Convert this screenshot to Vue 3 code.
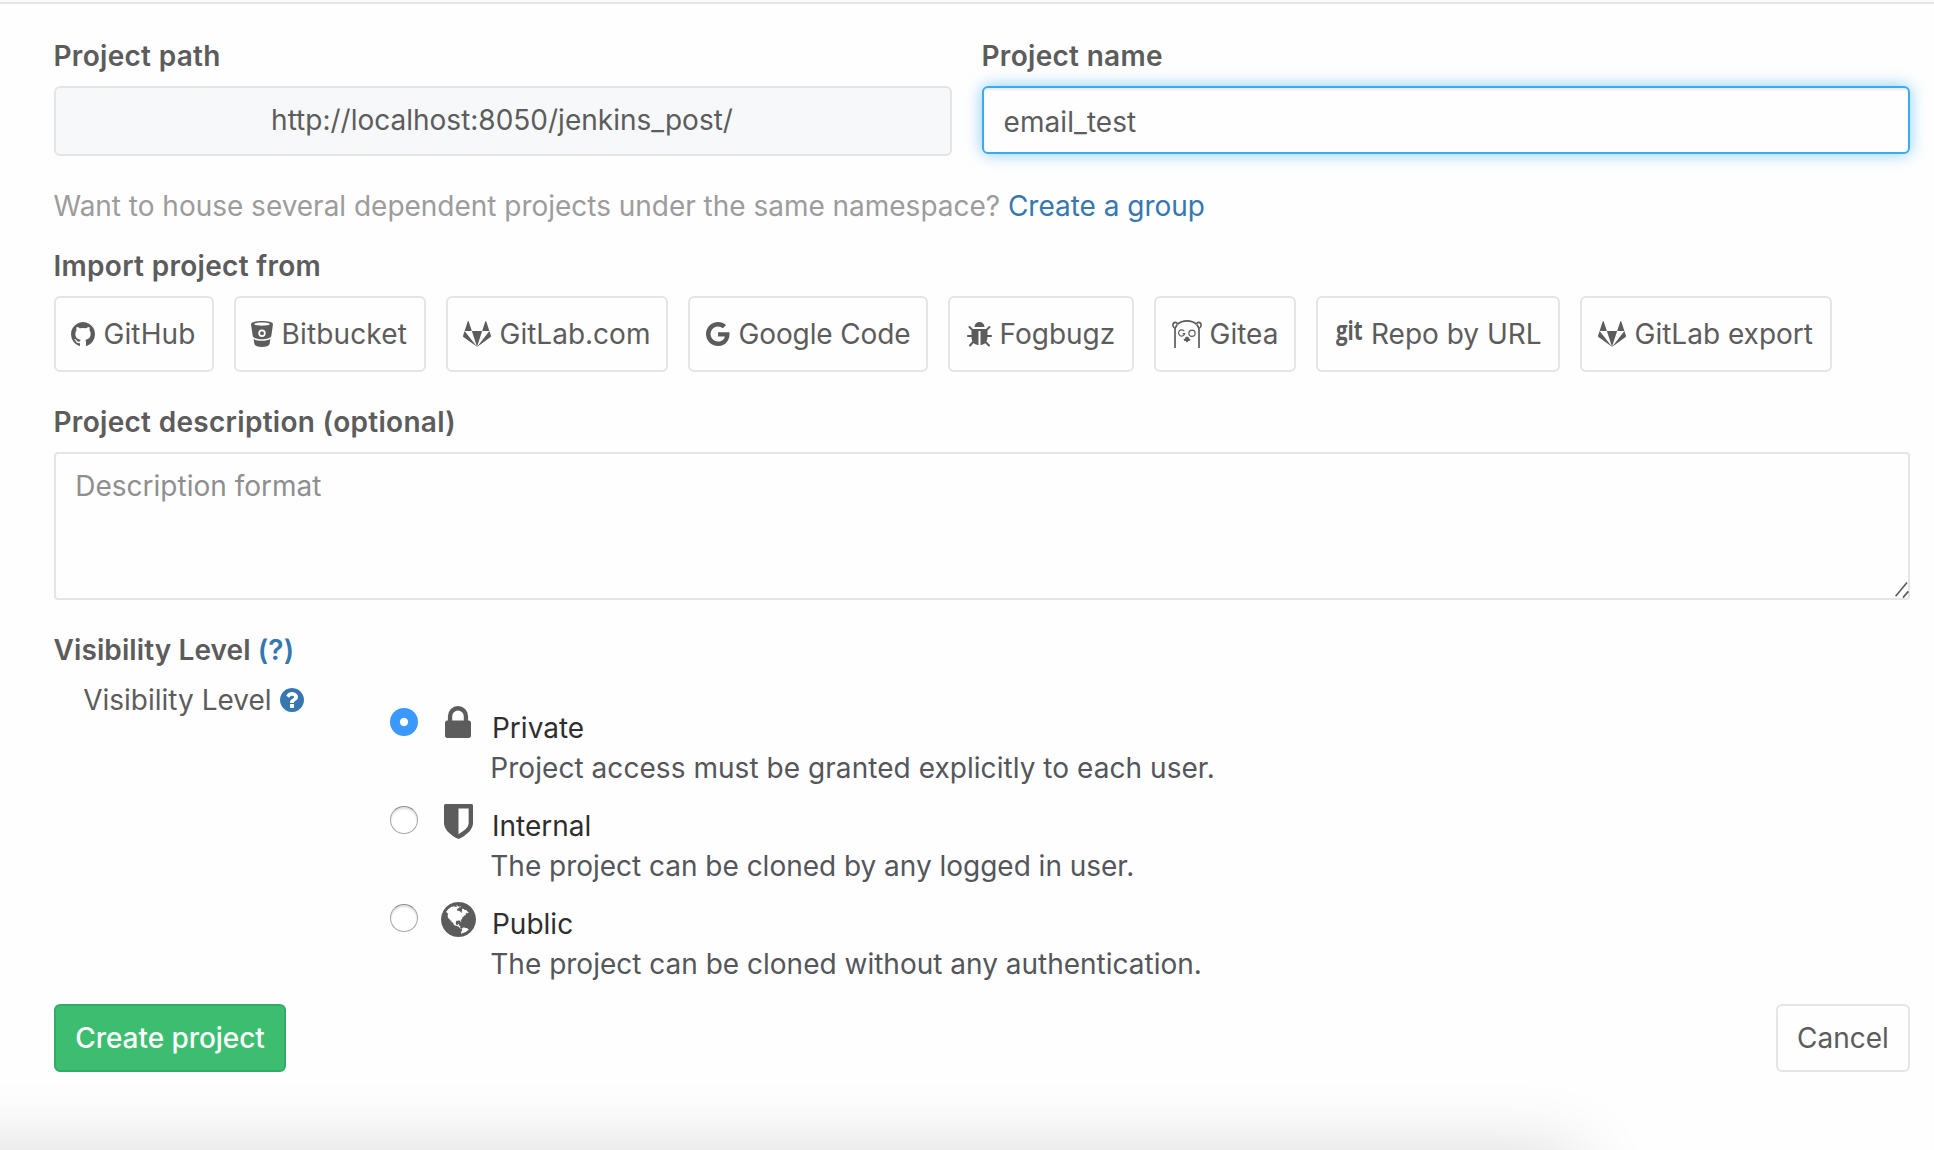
<script setup>
import { ref } from 'vue'

const projectName = ref('email_test')
const description = ref('')
const visibility = ref('private')

const tanuki = 'M104 706l792 1015-868-630q-18-13-25-34.5t0-42.5zm462 0h660l-330 1015zm-198-612l198 612h-462l198-612q8-23 33-23t33 23zm1320 612l101 309q7 21 0 42.5t-25 34.5l-868 630zm0 0h-462l198-612q8-23 33-23t33 23z'

const importers = [
  { id: 'github', label: 'GitHub' },
  { id: 'bitbucket', label: 'Bitbucket' },
  { id: 'gitlab', label: 'GitLab.com' },
  { id: 'google', label: 'Google Code' },
  { id: 'fogbugz', label: 'Fogbugz' },
  { id: 'gitea', label: 'Gitea' },
  { id: 'repo', label: 'Repo by URL' },
  { id: 'export', label: 'GitLab export' }
]

const levels = [
  { id: 'private', title: 'Private', text: 'Project access must be granted explicitly to each user.' },
  { id: 'internal', title: 'Internal', text: 'The project can be cloned by any logged in user.' },
  { id: 'public', title: 'Public', text: 'The project can be cloned without any authentication.' }
]
</script>

<template>
  <div class="page">
    <form class="form" @submit.prevent>
      <div class="row">
        <div class="col path">
          <label class="label">Project path</label>
          <div class="static">http://localhost:8050/jenkins_post/</div>
        </div>
        <div class="col name">
          <label class="label">Project name</label>
          <input v-model="projectName" class="input" type="text" />
        </div>
      </div>

      <p class="hint">Want to house several dependent projects under the same namespace? <a class="link">Create a group</a></p>

      <label class="label">Import project from</label>
      <div class="importers">
        <a v-for="item in importers" :key="item.id" class="btn import" :class="item.id">
          <svg v-if="item.id === 'github'" class="icon" width="24" height="24" viewBox="128 128 1536 1500" preserveAspectRatio="none">
            <path d="M896 128q209 0 385.5 103t279.5 279.5 103 385.5q0 251-146.5 451.5t-378.5 277.5q-27 5-40-7t-13-30q0-3 .5-76.500t.5-134.500q0-97-52-142 57-6 102.500-18t94-39 81-66.500 53-105 20.500-150.500q0-119-79-206 37-91-8-204-28-9-81 11t-92 44l-38 24q-93-26-192-26t-192 26q-16-11-42.500-27t-83.500-38.500-85-13.500q-45 113-8 204-79 87-79 206 0 85 20.500 150t52.500 105 80.500 67 94 39 102.500 18q-39 36-49 103-21 10-45 15t-57 5-65.500-21.500-55.500-62.500q-19-32-48.500-52t-49.500-24l-20-3q-21 0-29 4.500t-5 11.500 9 14 13 12l7 5q22 10 43.500 38t31.500 51l10 23q13 38 44 61.500t67 30 69.500 7 55.500-3.500l23-4q0 38 .5 88.500t.5 54.500q0 18-13 30t-40 7q-232-77-378.500-277.500t-146.500-451.500q0-209 103-385.500t279.500-279.500 385.500-103z" />
          </svg>
          <svg v-else-if="item.id === 'bitbucket'" class="icon" width="22" height="26" viewBox="0 0 22 26">
            <path fill-rule="evenodd" d="M11 0C17 0 22 1 22 3.200L20.300 14.800C20.100 16.800 16 18.300 11 18.300S1.900 16.800 1.700 14.800L0 3.200C0 1 5 0 11 0zM11 1.500C6.500 1.500 3.200 2.200 3.200 3.100S6.500 4.700 11 4.700 18.800 4 18.800 3.100 15.500 1.500 11 1.500zM11 8.500A3.700 3.700 0 1 0 11 15.900A3.700 3.700 0 1 0 11 8.500z" />
            <circle cx="11" cy="12.200" r="1.900" />
            <path d="M2.600 18C6 20.400 16 20.400 19.400 18L18.600 23C18 25 15 25.900 11 25.900S4 25 3.400 23z" />
          </svg>
          <svg v-else-if="item.id === 'gitlab' || item.id === 'export'" class="icon" width="28" height="26" viewBox="0 66 1792 1664">
            <path :d="tanuki" />
          </svg>
          <svg v-else-if="item.id === 'google'" class="icon" width="24" height="24" viewBox="128 128 1536 1536">
            <path d="M896 786h725q12 67 12 128 0 217-91 387.500t-259.500 266.500-386.500 96q-157 0-299-60.500t-245-163.500-163.500-245-60.500-299 60.500-299 163.500-245 245-163.500 299-60.500q300 0 515 201l-209 201q-123-119-306-119-129 0-238.500 65t-173.500 176.500-64 243.500 64 243.500 173.500 176.500 238.500 65q87 0 160-24t120-60 82-82 51.500-87 22.500-78h-436v-264z" />
          </svg>
          <svg v-else-if="item.id === 'fogbugz'" class="icon" width="25" height="25" viewBox="96 64 1600 1600">
            <path d="M1696 960q0 26-19 45t-45 19h-224q0 171-67 290l208 209q19 19 19 45t-19 45q-18 19-45 19t-45-19l-198-197q-5 5-15 13t-42 28.500-65 36.500-82 29-97 13v-896h-128v896q-51 0-101.500-13.500t-87-33-66-39-43.500-32.500l-15-14-183 207q-20 21-48 21-24 0-43-16-19-18-20.500-44.500t15.500-46.500l202-227q-58-114-58-274h-224q-26 0-45-19t-19-45 19-45 45-19h224v-294l-173-173q-19-19-19-45t19-45 45-19 45 19l173 173h844l173-173q19-19 45-19t45 19 19 45-19 45l-173 173v294h224q26 0 45 19t19 45zm-480-576h-640q0-133 93.500-226.500t226.500-93.500 226.500 93.500 93.500 226.500z" />
          </svg>
          <svg v-else-if="item.id === 'gitea'" class="icon line" width="30" height="28" viewBox="0 0 30 28">
            <path stroke-width="1.700" d="M3 28V10C3 8 4 6 5.200 4.600M27 28V10C27 8 26 6 24.800 4.600M5.500 4.300C8 2 11 .9 15 .9S22 2 24.500 4.300" />
            <path stroke-width="1.600" d="M2.800 8.400C-.2 6.500.6 2.400 3.400 2.400C4.400 2.400 5.200 3 5.600 4M27.200 8.400C30.200 6.500 29.400 2.400 26.600 2.400C25.600 2.400 24.800 3 24.400 4" />
            <path stroke-width="1.200" d="M12.300 11.300A3.100 3.100 0 1 0 12.700 13.600H10.600" />
            <circle cx="20" cy="13.200" r="3.100" stroke-width="1.200" />
            <path class="solid" d="M13.200 17.600C13.200 16.600 16.800 16.600 16.800 17.600V18.600L18.500 19.300 17.600 21H16.200L15.600 22.300H14.400L13.800 21H12.400L11.500 19.300L13.200 18.600z" />
          </svg>
          <span v-else class="icon git-mark">git</span>
          <span>{{ item.label }}</span>
        </a>
      </div>

      <label class="label desc-label">Project description (optional)</label>
      <div class="area-wrap">
        <textarea v-model="description" class="area" placeholder="Description format"></textarea>
        <svg class="grip" width="16" height="18" viewBox="0 0 16 18">
          <path d="M1.600 15.200L13 1.500M9 16.600L14.400 10.400" />
        </svg>
      </div>

      <div class="label vis-heading">Visibility Level <a class="link">(?)</a></div>
      <div class="visibility">
        <div class="vis-label">
          <span>Visibility Level</span>
          <svg class="help" width="24" height="24" viewBox="128 128 1536 1536">
            <path d="M1024 1376v-192q0-14-9-23t-23-9h-192q-14 0-23 9t-9 23v192q0 14 9 23t23 9h192q14 0 23-9t9-23zm256-672q0-88-55.500-163t-138.500-116-170-41q-243 0-371 213-15 24 8 42l132 100q7 6 19 6 16 0 25-12 53-68 86-92 34-24 86-24 48 0 85.500 26t37.500 59q0 38-20 61t-68 45q-63 28-115.500 86.500t-52.500 125.500v36q0 14 9 23t23 9h192q14 0 23-9t9-23q0-19 21.500-49.500t54.500-49.500q32-18 49-28.500t46-35 44.500-48 28-60.500 12.500-81zm384 192q0 209-103 385.500t-279.500 279.500-385.500 103-385.500-103-279.500-279.500-103-385.500 103-385.500 279.500-279.500 385.500-103 385.500 103 279.500 279.500 103 385.500z" />
          </svg>
        </div>
        <div class="levels">
          <div v-for="level in levels" :key="level.id" class="level" @click="visibility = level.id">
            <span class="radio" :class="{ on: visibility === level.id }"></span>
            <span class="glyph">
              <svg v-if="level.id === 'private'" width="26" height="32" viewBox="320 128 1152 1408">
                <path d="M640 768h512v-192q0-106-75-181t-181-75-181 75-75 181v192zm832 96v576q0 40-28 68t-68 28h-960q-40 0-68-28t-28-68v-576q0-40 28-68t68-28h32v-192q0-184 132-316t316-132 316 132 132 316v192h32q40 0 68 28t28 68z" />
              </svg>
              <svg v-else-if="level.id === 'internal'" width="29" height="35" viewBox="256 128 1280 1536">
                <path d="M1344 960v-640h-448v1137q119-63 213-137 235-184 235-360zm192-768v768q0 86-33.500 170.500t-83 150-118 127.500-126.500 103-121 77.500-89.500 49.500-42.500 20q-12 6-26 6t-26-6q-16-7-42.500-20t-89.500-49.500-121-77.500-126.500-103-118-127.500-83-150-33.500-170.500v-768q0-26 19-45t45-19h1152q26 0 45 19t19 45z" />
              </svg>
              <svg v-else width="35" height="35" viewBox="128 128 1536 1536">
                <path d="M896 128q209 0 385.500 103t279.500 279.500 103 385.500-103 385.500-279.500 279.500-385.500 103-385.500-103-279.500-279.500-103-385.500 103-385.500 279.500-279.500 385.500-103zm274 521q-2 1-9.500 9.500t-13.500 9.500q2 0 4.500-5t5-11 3.500-7q6-7 22-15 14-6 52-12 34-8 51 11-2-2 9.500-13t14.500-12q3-2 15-4.500t15-7.500l2-22q-12 1-17.500-7t-6.500-21q0 2-6 8 0-7-4.500-8t-11.500 1-9 1q-10-3-15-7.500t-8-16.500-4-15q-2-5-9.500-10.500t-9.500-10.500q-1-2-2.500-5.500t-3-6.500-4-5.500-5.500-2.500-7 5-7.500 10-4.500 5q-3-2-6-1.500t-4.500 1-4.500 3-5 3.500q-3 2-8.500 3t-8.500 2q15-5-1-11-10-4-16-3 9-4 7.500-12t-8.500-14h5q-1-4-8.500-8.500t-17.500-8.500-13-6q-8-5-34-9.500t-33-.5q-5 6-4.500 10.500t4 14 3.500 12.500q1 6-5.500 13t-6.500 12q0 7 14 15.500t10 21.500q-3 8-16 16t-16 12q-5 8-1.500 18.500t10.500 16.500q2 2 1.500 4t-3.500 4.500-5.500 4-6.500 3.500l-3 2q-11 5-20.500-6t-13.500-26q-7-25-16-30-23-8-29 1-5-13-41-26-25-9-58-4 6-1 0-15-7-15-19-12 3-6 4-17.500t1-13.500q3-13 12-23 1-1 7-8.500t9.500-13.500.5-6q35 4 50-11 5-5 11.500-17t10.500-17q9-6 14-5.500t14.500 5.500 14.500 5q14 1 15.500-11t-7.500-20q12 1 3-17-4-7-8-9-12-4-27 5-8 4 2 8-1-1-9.500 10.500t-16.500 17.500-16-5q-1-1-5.500-13.500t-9.500-13.500q-8 0-16 15 3-8-11-15t-24-8q19-12-8-27-7-4-20.500-5t-19.500 4q-5 7-5.500 11.500t5 8 10.500 5.500 11.500 4 8.500 3q14 10 8 14-2 1-8.500 3.500t-11.500 4.500-6 4q-3 4 0 14t-2 14q-5-5-9-17.500t-7-16.500q7 9-25 6l-10-1q-4 0-16 2t-20.500 1-13.500-8q-4-8 0-20 1-4 4-2-4-3-11-9.500t-10-8.500q-46 15-94 41 6 1 12-1 5-2 13-6.500t10-5.500q34-14 42-7l5-5q14 16 20 25-7-4-30-1-20 6-22 12 7 12 5 18-4-3-11.500-10t-14.500-11-15-5q-16 0-22 1-146 80-235 222 7 7 12 8 4 1 5 9t2.500 11 11.500-3q9 8 3 19 1-1 44 27 19 17 21 21 3 11-10 18-1-2-9-9t-9-4q-3 5 .5 18.500t10.500 12.500q-7 0-9.500 16t-2.500 35.500-1 23.500l2 1q-3 12 5.500 34.500t21.500 19.500q-13 3 20 43 6 8 8 9 3 2 12 7.500t15 10 10 10.500q4 5 10 22.500t14 23.500q-2 6 9.500 20t10.500 23q-1 0-2.500 1t-2.500 1q3 7 15.500 14t15.500 13q1 3 2 10t3 11 8 2q2-20-24-62-15-25-17-29-3-5-5.500-15.500t-4.500-14.500q2 0 6 1.500t8.500 3.500 7.500 4 2 3q-3 7 2 17.500t12 18.500 17 19 12 13q6 6 14 19.500t0 13.500q9 0 20 10.500t17 19.500q5 8 8 26t5 24q2 7 8.500 13.500t12.500 9.500l16 8 13 7q5 2 18.500 10.500t21.500 11.500q10 4 16 4t14.500-2.500 13.500-3.500q15-2 29 15t21 21q36 19 55 11-2 1 .5 7.500t8 15.500 9 14.500 5.500 8.500q5 6 18 15t18 15q6-4 7-9-3 8 7 20t18 10q14-3 14-32-31 15-49-18 0-1-2.500-5.500t-4-8.500-2.500-8.500 0-7.500 5-3q9 0 10-3.500t-2-12.500-4-13q-1-8-11-20t-12-15q-5 9-16 8t-16-9q0 1-1.500 5.500t-1.500 6.500q-13 0-15-1 1-3 2.500-17.500t3.500-22.500q1-4 5.500-12t7.500-14.500 4-12.500-4.500-9.500-17.500-2.500q-19 1-26 20-1 3-3 10.500t-5 11.500-9 7q-7 3-24 2t-24-5q-13-8-22.500-29t-9.500-37q0-10 2.500-26.500t3-25-5.500-24.500q3-2 9-9.500t10-10.500q2-1 4.500-1.500t4.500 0 4-1.500 3-6q-1-1-4-3-3-3-4-3 7 3 28.500-1.500t27.500 1.500q15 11 22-2 0-1-2.500-9.500t-.5-13.500q5 27 29 9 3 3 15.500 5t17.500 5q3 2 7 5.500t5.500 4.500 5-.5 8.500-6.500q10 14 12 24 11 40 19 44 7 3 11 2t4.500-9.500 0-14-1.500-12.500l-1-8v-18l-1-8q-15-3-18.500-12t1.500-18.500 15-18.500q1-1 8-3.500t15.500-6.500 12.500-8q21-19 15-35 7 0 11-9-1 0-5-3t-7.500-5-4.500-2q9-5 2-16 5-3 7.500-11t7.500-10q9 12 21 2 8-8 1-16 5-7 20.500-10.500t18.500-9.500q7 2 8-2t1-12 3-12q4-5 15-9t13-5l17-11q3-4 0-4 18 2 31-11 10-11-6-20 3-6-3-9.500t-15-5.500q3-1 11.500-.5t10.500-1.500q15-10-7-16-17-5-43 12zm-163 877q206-36 351-189-3-3-12.500-4.500t-12.500-3.500q-18-7-24-8 1-7-2.500-13t-8-9-12.500-8-11-7q-2-2-7-6t-7-5.500-7.500-4.500-8.500-2-10 1l-3 1q-3 1-5.500 2.500t-5.500 3-4 3 0 2.500q-21-17-36-22-5-1-11-5.500t-10.500-7-10-1.500-11.500 7q-5 5-6 15t-2 13q-7-5 0-17.500t2-18.500q-3-6-10.500-4.500t-12 4.500-11.500 8.500-9 6.500-8.500 5.500-8.500 7.500q-3 4-6 12t-5 11q-2-4-11.500-6.500t-9.500-5.500q2 10 4 35t5 38q7 31-12 48-27 25-29 40-4 22 12 26 0 7-8 20.500t-7 21.500q0 6 2 16z" />
              </svg>
            </span>
            <div class="copy">
              <div class="title">{{ level.title }}</div>
              <div class="text" :class="level.id + '-text'">{{ level.text }}</div>
            </div>
          </div>
        </div>
      </div>

      <div class="actions">
        <button class="btn create" type="submit">Create project</button>
        <a class="btn cancel">Cancel</a>
      </div>
    </form>
    <div class="window-shadow"></div>
  </div>
</template>

<style>
body {
  margin: 0;
  background: #fefefe;
}
</style>

<style scoped>
.page {
  position: relative;
  box-sizing: border-box;
  width: 1934px;
  height: 1150px;
  overflow: hidden;
  padding: 32px 24px 0 54px;
  background: #fefefe;
  border-top: 2px solid #fafafa;
  color: #5c5c5c;
  font: 28px/40px Inter, "Liberation Sans", sans-serif;
  box-shadow: inset 0 2px 0 #e5e5e5;
}
.page * {
  box-sizing: border-box;
}
.form {
  display: flex;
  flex-direction: column;
  padding-top: 2px;
}
.row {
  display: flex;
  gap: 30px;
  height: 120px;
}
.col {
  display: flex;
  flex-direction: column;
}
.path { width: 898px; }
.name { width: 928px; }
.label {
  display: block;
  height: 40px;
  margin: 0 0 10px -0.5px;
  font-weight: 600;
  letter-spacing: 0.3px;
  white-space: nowrap;
}
.static {
  height: 70px;
  padding: 13px 2px 13px 0;
  border: 2px solid #e5e5e5;
  border-radius: 6px;
  background: #f7f8fa;
  text-align: center;
  line-height: 38px;
}
.input {
  height: 68px;
  padding: 4px 18px 0 19.5px;
  border: 2px solid #3aabf0;
  border-radius: 6px;
  outline: none;
  background: #fefefe;
  box-shadow: inset 0 2px 2px rgba(0, 0, 0, 0.075), 0 0 16px rgba(58, 171, 240, 0.6);
  color: inherit;
  font: inherit;
  letter-spacing: 0.08px;
}
.hint {
  height: 40px;
  margin: 30px 0 20px -0.5px;
  color: #9c9c9c;
  letter-spacing: -0.02px;
}
.link { color: #3777b0; }
.importers {
  display: flex;
  gap: 20px;
}
.btn {
  display: flex;
  align-items: center;
  border: 2px solid #e5e5e5;
  border-radius: 6px;
  background: #fefefe;
  color: #5c5c5c;
  white-space: nowrap;
}
.import {
  height: 76px;
  padding-left: 15px;
  gap: 8.5px;
}
.icon {
  flex: none;
  fill: currentColor;
}
.icon.line {
  fill: none;
  stroke: currentColor;
}
.icon.line .solid {
  fill: currentColor;
  stroke: none;
}
.github { width: 160px; letter-spacing: 0.1px; }
.bitbucket { width: 192px; letter-spacing: 0.15px; }
.gitlab { width: 222px; }
.google { width: 240px; padding-left: 16px; letter-spacing: -0.12px; }
.fogbugz { width: 186px; padding-left: 16.5px; gap: 8px; }
.gitea { width: 142px; padding-left: 16px; gap: 7.5px; }
.repo { width: 244px; padding-left: 17.5px; }
.export { width: 252px; padding-left: 16px; }
.git-mark {
  width: 27px;
  height: 40px;
  font: 700 27px/31px "Open Sans", "Noto Sans", sans-serif;
  transform: scaleX(0.76);
  transform-origin: left;
}
.desc-label { margin-top: 30px; }
.area-wrap {
  position: relative;
  height: 148px;
}
.area {
  display: block;
  width: 100%;
  height: 148px;
  padding: 12px 19.3px;
  border: 2px solid #e5e5e5;
  border-radius: 4px;
  outline: none;
  resize: none;
  background: #fefefe;
  color: inherit;
  font: inherit;
}
.area::placeholder {
  color: #8f8f8f;
  opacity: 1;
}
.grip {
  position: absolute;
  right: 0;
  bottom: 1px;
  fill: none;
  stroke: #5f5f5f;
  stroke-width: 1.7;
}
.vis-heading {
  margin: 30px 0 10px -0.5px;
  letter-spacing: 0.1px;
}
.visibility {
  display: flex;
}
.vis-label {
  display: flex;
  align-items: center;
  gap: 8px;
  width: 336px;
  height: 40px;
  padding-left: 29.2px;
}
.help { fill: #3777b0; }
.levels {
  display: flex;
  flex-direction: column;
  gap: 18px;
  padding-top: 28px;
}
.level {
  display: flex;
  height: 80px;
}
.radio {
  width: 28px;
  height: 28px;
  border: 1px solid #a6a6a6;
  border-top-color: #8c8c8c;
  border-radius: 50%;
  background: #fff;
  box-shadow: inset 0 2px 2px rgba(0, 0, 0, 0.13);
}
.radio.on {
  border: 0;
  background: radial-gradient(circle, #fff 3.6px, #3b99fc 4.6px);
  box-shadow: none;
}
.glyph {
  display: flex;
  justify-content: center;
  width: 35px;
  height: 35px;
  margin: -2px 0 0 22.5px;
  fill: #5c5c5c;
}
.copy {
  margin-left: 14.8px;
  white-space: nowrap;
}
.title {
  padding-left: 1.7px;
  color: #2e2e2e;
}
.text { color: #54565b; }
.private-text { letter-spacing: 0.05px; }
.internal-text { letter-spacing: -0.02px; }
.actions {
  display: flex;
  justify-content: space-between;
  margin-top: 20px;
}
.create,
.cancel {
  justify-content: center;
  height: 68px;
}
.create {
  width: 232px;
  padding: 0;
  border-color: #35a967;
  background: #3dbd70;
  color: #fff;
  font: inherit;
  font-weight: 500;
  letter-spacing: -0.06px;
}
.cancel { width: 134px; }
.window-shadow {
  position: absolute;
  left: -200px;
  top: 1153px;
  width: 1778px;
  height: 400px;
  box-shadow: 0 0 70px rgba(0, 0, 0, 0.16);
}
</style>
